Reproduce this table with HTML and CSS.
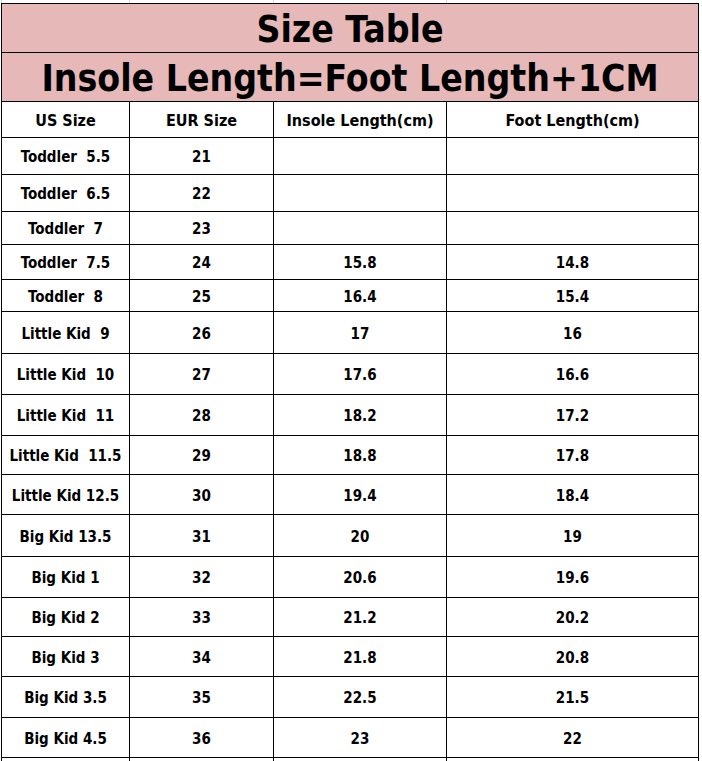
FILE: index.html
```html
<!DOCTYPE html>
<html>
<head>
<meta charset="utf-8">
<link rel="stylesheet" href="styles.css">
</head>
<body>
<div class="gridtop">
  <span class="g g1"></span><span class="g g2"></span><span class="g g3"></span><span class="g g4"></span>
</div>
<div class="sheet">
  <div class="title h49">Size Table</div>
  <div class="title sub h49">Insole Length=Foot Length+1CM</div>
  <div class="row head h36"><div>US Size</div><div>EUR Size</div><div>Insole Length(cm)</div><div>Foot Length(cm)</div></div>
  <div class="row h37"><div>Toddler&nbsp; 5.5</div><div>21</div><div></div><div></div></div>
  <div class="row h37"><div>Toddler&nbsp; 6.5</div><div>22</div><div></div><div></div></div>
  <div class="row h33"><div>Toddler&nbsp; 7</div><div>23</div><div></div><div></div></div>
  <div class="row h35"><div>Toddler&nbsp; 7.5</div><div>24</div><div>15.8</div><div>14.8</div></div>
  <div class="row h32"><div>Toddler&nbsp; 8</div><div>25</div><div>16.4</div><div>15.4</div></div>
  <div class="row h42"><div>Little Kid&nbsp; 9</div><div>26</div><div>17</div><div>16</div></div>
  <div class="row h41"><div>Little Kid&nbsp; 10</div><div>27</div><div>17.6</div><div>16.6</div></div>
  <div class="row h41"><div>Little Kid&nbsp; 11</div><div>28</div><div>18.2</div><div>17.2</div></div>
  <div class="row h39"><div>Little Kid&nbsp; 11.5</div><div>29</div><div>18.8</div><div>17.8</div></div>
  <div class="row h40"><div>Little Kid 12.5</div><div>30</div><div>19.4</div><div>18.4</div></div>
  <div class="row h42"><div>Big Kid 13.5</div><div>31</div><div>20</div><div>19</div></div>
  <div class="row h41"><div>Big Kid 1</div><div>32</div><div>20.6</div><div>19.6</div></div>
  <div class="row h39"><div>Big Kid 2</div><div>33</div><div>21.2</div><div>20.2</div></div>
  <div class="row h40"><div>Big Kid 3</div><div>34</div><div>21.8</div><div>20.8</div></div>
  <div class="row h41"><div>Big Kid 3.5</div><div>35</div><div>22.5</div><div>21.5</div></div>
  <div class="row h40"><div>Big Kid 4.5</div><div>36</div><div>23</div><div>22</div></div>
  <div class="row h40"><div></div><div></div><div></div><div></div></div>
</div>
</body>
</html>
```
FILE: styles.css
```css
html, body {
  margin: 0;
  padding: 0;
  background: #ffffff;
  overflow: hidden;
}
body {
  font-family: "DejaVu Sans", Verdana, sans-serif;
  font-weight: bold;
  color: #000000;
}
.gridtop {
  display: grid;
  grid-template-columns: 2px 128px 144px 173px 252px;
  height: 3px;
}
.g {
  height: 3px;
  border-right: 1px solid #d8d8d8;
  box-sizing: border-box;
}
.sheet {
  margin-left: 1px;
  width: 698px;
  box-sizing: border-box;
  border-top: 1px solid #000;
  border-left: 1px solid #000;
}
.title {
  background: #e6b8b7;
  border-right: 1px solid #000;
  border-bottom: 1px solid #000;
  box-sizing: border-box;
  display: flex;
  align-items: center;
  justify-content: center;
  padding-top: 2px;
  font-size: 37px;
  font-stretch: condensed;
}
.row {
  display: grid;
  grid-template-columns: 128px 144px 173px 252px;
}
.row > div {
  border-right: 1px solid #000;
  border-bottom: 1px solid #000;
  box-sizing: border-box;
  display: flex;
  align-items: center;
  justify-content: center;
  padding-top: 2px;
  font-size: 15px;
  font-stretch: condensed;
  white-space: pre;
}
.head > div {
  font-size: 16px;
}
.h49 { height: 49px; }
.h42 { height: 42px; }
.h41 { height: 41px; }
.h40 { height: 40px; }
.h39 { height: 39px; }
.h37 { height: 37px; }
.h36 { height: 36px; }
.h35 { height: 35px; }
.h33 { height: 33px; }
.h32 { height: 32px; }
```
